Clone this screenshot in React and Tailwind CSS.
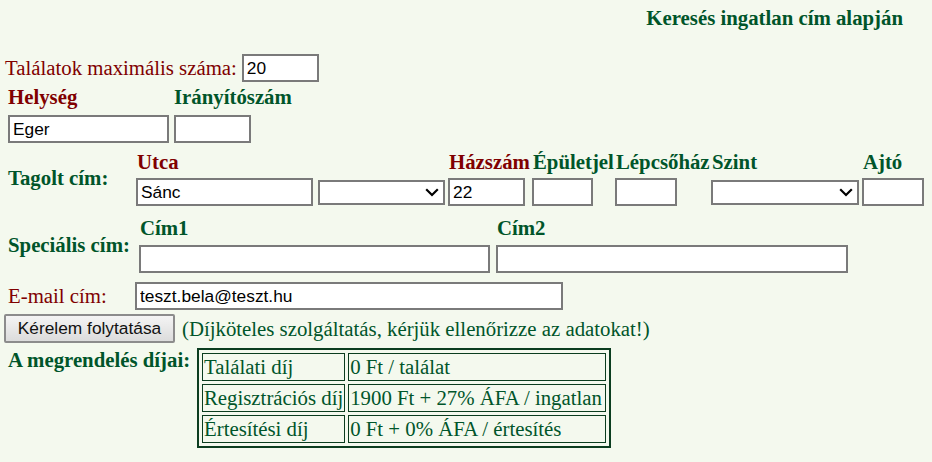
import React from "react";

const G = "text-[#00552a]";
const M = "text-[#800000]";

function Input({ w, value = "" }) {
  return (
    <input
      type="text"
      defaultValue={value}
      className={`h-[28px] ${w} bg-white border-2 border-[#7a7a7a] px-[3px] text-[17.33px] text-black font-['Liberation_Sans',Arial,sans-serif] outline-none`}
    />
  );
}

function Select({ w }) {
  return (
    <div className={`relative h-[25px] ${w}`}>
      <select className="appearance-none h-full w-full bg-white border-2 border-[#7a7a7a] outline-none">
        <option></option>
      </select>
      <svg
        className="absolute right-[6px] top-[8px] pointer-events-none"
        width="14"
        height="9"
        viewBox="0 0 14 9"
      >
        <path d="M1.2 1.2 L7 7 L12.8 1.2" fill="none" stroke="#000" strokeWidth="2.2" />
      </svg>
    </div>
  );
}

function Col({ w, label, color, children }) {
  return (
    <div className={`flex flex-col ${w}`}>
      <div className={`h-[24px] leading-[24px] font-bold pl-[1px] whitespace-nowrap ${color}`}>{label}</div>
      <div className="mt-[4px] h-[28px] flex items-center">{children}</div>
    </div>
  );
}

export default function App() {
  return (
    <div className="w-[932px] h-[462px] bg-[#f4f9ee] font-['Liberation_Serif','Times_New_Roman',serif] text-[20.8px] leading-[24px] overflow-hidden">
      <div className="pt-[6px] flex justify-end pr-[29px]">
        <div className={`font-bold ${G} h-[24px]`}>Keresés ingatlan cím alapján</div>
      </div>

      <div className="mt-[24px] flex items-center pl-[5px] h-[28px]">
        <span className={`${M} mr-[5px]`}>Találatok maximális száma:</span>
        <Input w="w-[77px]" value="20" />
      </div>

      <div className="mt-[3px] pl-[8px]">
        <div className="flex h-[24px] font-bold">
          <div className={`w-[166px] ${M}`}>Helység</div>
          <div className={G}>Irányítószám</div>
        </div>
        <div className="mt-[6px] flex gap-[5px]">
          <Input w="w-[161px]" value="Eger" />
          <Input w="w-[77px]" />
        </div>
      </div>

      <div className="mt-[7px] pl-[8px] flex items-center">
        <div className={`w-[128px] font-bold ${G}`}>Tagolt cím:</div>
        <div className="flex">
          <Col w="w-[182px]" label="Utca" color={M}>
            <Input w="w-[177px]" value="Sánc" />
          </Col>
          <Col w="w-[130px]" label="" color={G}>
            <Select w="w-[127px]" />
          </Col>
          <Col w="w-[84px]" label="Házszám" color={M}>
            <Input w="w-[77px]" value="22" />
          </Col>
          <Col w="w-[83px]" label="Épületjel" color={G}>
            <Input w="w-[61px]" />
          </Col>
          <Col w="w-[96px]" label="Lépcsőház" color={G}>
            <Input w="w-[62px]" />
          </Col>
          <Col w="w-[151px]" label="Szint" color={G}>
            <Select w="w-[148px]" />
          </Col>
          <Col w="w-[62px]" label="Ajtó" color={G}>
            <Input w="w-[62px]" />
          </Col>
        </div>
      </div>

      <div className="mt-[10px] pl-[8px] flex items-center">
        <div className={`w-[131px] font-bold ${G}`}>Speciális cím:</div>
        <div className="flex">
          <div className="flex flex-col w-[357px]">
            <div className={`h-[24px] font-bold pl-[1px] ${G}`}>Cím1</div>
            <div className="mt-[5px]">
              <Input w="w-[351px]" />
            </div>
          </div>
          <div className="flex flex-col w-[352px]">
            <div className={`h-[24px] font-bold pl-[1px] ${G}`}>Cím2</div>
            <div className="mt-[5px]">
              <Input w="w-[352px]" />
            </div>
          </div>
        </div>
      </div>

      <div className="mt-[9px] pl-[8px] flex items-center h-[28px]">
        <div className={`w-[127px] ${M}`}>E-mail cím:</div>
        <Input w="w-[428px]" value="teszt.bela@teszt.hu" />
      </div>

      <div className="mt-[4px] pl-[4px] flex items-center h-[29px]">
        <button className="h-[29px] w-[171px] rounded-[2px] border-2 border-[#8c8c8c] bg-gradient-to-b from-[#f4f4f4] to-[#dcdcdc] text-[17.33px] leading-none text-[#111] font-['Liberation_Sans',Arial,sans-serif]">
          Kérelem folytatása
        </button>
        <span className={`ml-[7px] ${G}`}>
          (Díjköteles szolgáltatás, kérjük ellenőrizze az adatokat!)
        </span>
      </div>

      <div className="mt-[5px] pl-[8px] flex items-start">
        <div className={`w-[189px] font-bold ${G}`}>A megrendelés díjai:</div>
        <table className="border-separate border-spacing-[3px] border-2 border-[#0b3d1f]">
          <tbody className={G}>
            <tr>
              <td className="w-[143px] h-[28px] border border-[#0b3d1f] px-[1px] py-0 leading-[24px] whitespace-nowrap">Találati díj</td>
              <td className="w-[258px] h-[28px] border border-[#0b3d1f] px-[1px] py-0 leading-[24px] whitespace-nowrap">0 Ft / találat</td>
            </tr>
            <tr>
              <td className="h-[28px] border border-[#0b3d1f] px-[1px] py-0 leading-[24px] whitespace-nowrap">Regisztrációs díj</td>
              <td className="h-[28px] border border-[#0b3d1f] px-[1px] py-0 leading-[24px] whitespace-nowrap">1900 Ft + 27% ÁFA / ingatlan</td>
            </tr>
            <tr>
              <td className="h-[28px] border border-[#0b3d1f] px-[1px] py-0 leading-[24px] whitespace-nowrap">Értesítési díj</td>
              <td className="h-[28px] border border-[#0b3d1f] px-[1px] py-0 leading-[24px] whitespace-nowrap">0 Ft + 0% ÁFA / értesítés</td>
            </tr>
          </tbody>
        </table>
      </div>
    </div>
  );
}
